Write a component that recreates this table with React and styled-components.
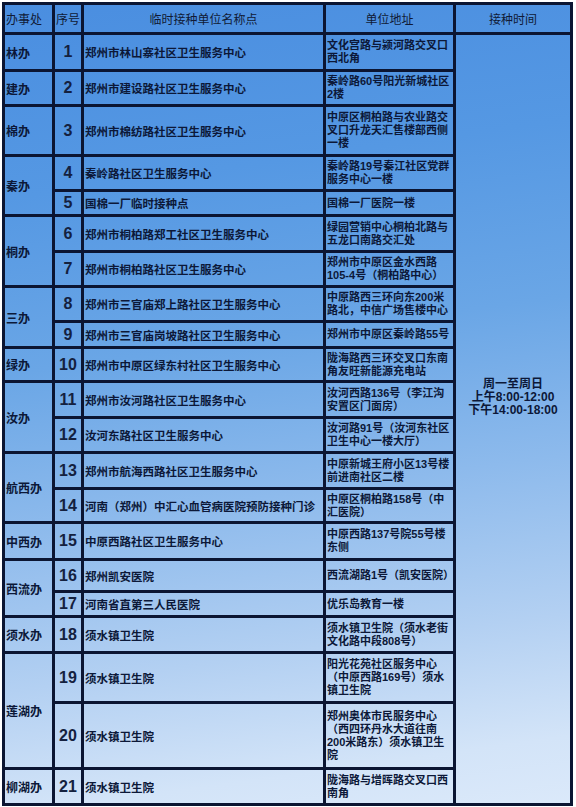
import React from 'react'
import styled, { createGlobalStyle } from 'styled-components'

const GlobalStyle = createGlobalStyle`
  html, body {
    margin: 0;
    padding: 0;
    background: #ffffff;
  }
  body {
    font-family: 'Liberation Sans', 'Noto Sans CJK SC', sans-serif;
    color: #0c1838;
  }
`

const Grid = styled.div`
  display: grid;
  grid-template-columns: 50px 29px 242px 130px 117px;
  grid-template-rows: 30px 37px 35px 50px 35px 25px 36px 35px 35px 26px 34px 36px 35px 36px 34px 37px 32px 25px 36px 50px 66px 36px;
  width: 568px;
  margin: 2px 0 0 2px;
  border-top: 3px solid #0b1532;
  border-left: 3px solid #0b1532;
  background: linear-gradient(
    172deg,
    #4a8ee0 0%,
    #5598e3 22%,
    #6aa6e6 42%,
    #8dbaec 60%,
    #b3d0f2 78%,
    #d3e4f8 92%,
    #dbe9fa 100%
  );
`

const Cell = styled.div`
  border-right: 3px solid #0b1532;
  border-bottom: 3px solid #0b1532;
  display: flex;
  align-items: center;
  min-width: 0;
  overflow: hidden;
  grid-column: ${(p) => p.$col};
  grid-row: ${(p) => (p.$row ? `${p.$row} / span ${p.$span || 1}` : 'auto')};
`

const HeadCell = styled(Cell)`
  justify-content: ${(p) => (p.$left ? 'flex-start' : 'center')};
  padding-left: ${(p) => (p.$left ? '1px' : '0')};
  font-size: 12px;
  font-weight: 400;
  color: #101a36;
`

const OfficeCell = styled(Cell)`
  padding-left: 1px;
  font-size: 12px;
  font-weight: 700;
  white-space: nowrap;
`

const NumCell = styled(Cell)`
  justify-content: center;
  font-size: 16px;
  font-weight: 700;
  color: #14213f;
`

const NameCell = styled(Cell)`
  padding-left: 1px;
  font-size: 11.5px;
  font-weight: 700;
  white-space: nowrap;
`

const AddrCell = styled(Cell)`
  padding-left: 1px;
  font-size: 11px;
  line-height: 13px;
  font-weight: 700;
  white-space: pre;
`

const TimeCell = styled(Cell)`
  flex-direction: column;
  justify-content: center;
  padding-bottom: 44px;
  font-size: 12px;
  line-height: 13px;
  font-weight: 700;
  text-align: center;
`

const groups = [
  { office: '林办', items: [[1, '郑州市林山寨社区卫生服务中心', '文化宫路与颍河路交叉口\n西北角']] },
  { office: '建办', items: [[2, '郑州市建设路社区卫生服务中心', '秦岭路60号阳光新城社区\n2楼']] },
  { office: '棉办', items: [[3, '郑州市棉纺路社区卫生服务中心', '中原区桐柏路与农业路交\n叉口升龙天汇售楼部西侧\n一楼']] },
  {
    office: '秦办',
    items: [
      [4, '秦岭路社区卫生服务中心', '秦岭路19号秦江社区党群\n服务中心一楼'],
      [5, '国棉一厂临时接种点', '国棉一厂医院一楼'],
    ],
  },
  {
    office: '桐办',
    items: [
      [6, '郑州市桐柏路郑工社区卫生服务中心', '绿园营销中心桐柏北路与\n五龙口南路交汇处'],
      [7, '郑州市桐柏路社区卫生服务中心', '郑州市中原区金水西路\n105-4号（桐柏路中心）'],
    ],
  },
  {
    office: '三办',
    items: [
      [8, '郑州市三官庙郑上路社区卫生服务中心', '中原路西三环向东200米\n路北，中信广场售楼中心'],
      [9, '郑州市三官庙岗坡路社区卫生服务中心', '郑州市中原区秦岭路55号'],
    ],
  },
  { office: '绿办', items: [[10, '郑州市中原区绿东村社区卫生服务中心', '陇海路西三环交叉口东南\n角友旺新能源充电站']] },
  {
    office: '汝办',
    items: [
      [11, '郑州市汝河路社区卫生服务中心', '汝河西路136号（李江沟\n安置区门面房）'],
      [12, '汝河东路社区卫生服务中心', '汝河路91号（汝河东社区\n卫生中心一楼大厅）'],
    ],
  },
  {
    office: '航西办',
    items: [
      [13, '郑州市航海西路社区卫生服务中心', '中原新城王府小区13号楼\n前进南社区二楼'],
      [14, '河南（郑州）中汇心血管病医院预防接种门诊', '中原区桐柏路158号（中\n汇医院）'],
    ],
  },
  { office: '中西办', items: [[15, '中原西路社区卫生服务中心', '中原西路137号院55号楼\n东侧']] },
  {
    office: '西流办',
    items: [
      [16, '郑州凯安医院', '西流湖路1号（凯安医院）'],
      [17, '河南省直第三人民医院', '优乐岛教育一楼'],
    ],
  },
  { office: '须水办', items: [[18, '须水镇卫生院', '须水镇卫生院（须水老街\n文化路中段808号）']] },
  {
    office: '莲湖办',
    items: [
      [19, '须水镇卫生院', '阳光花苑社区服务中心\n（中原西路169号）须水\n镇卫生院'],
      [20, '须水镇卫生院', '郑州奥体市民服务中心\n（西四环丹水大道往南\n200米路东）须水镇卫生\n院'],
    ],
  },
  { office: '柳湖办', items: [[21, '须水镇卫生院', '陇海路与增晖路交叉口西\n南角']] },
]

const App = () => {
  let row = 2
  const body = []
  groups.forEach((g) => {
    body.push(
      <OfficeCell key={g.office} $col={1} $row={row} $span={g.items.length}>
        {g.office}
      </OfficeCell>
    )
    g.items.forEach(([num, name, addr]) => {
      body.push(
        <NumCell key={`n${num}`} $col={2} $row={row}>{num}</NumCell>,
        <NameCell key={`m${num}`} $col={3} $row={row}>{name}</NameCell>,
        <AddrCell key={`a${num}`} $col={4} $row={row}>{addr}</AddrCell>
      )
      row += 1
    })
  })

  return (
    <>
      <GlobalStyle />
      <Grid>
        <HeadCell $col={1} $row={1} $left>办事处</HeadCell>
        <HeadCell $col={2} $row={1}>序号</HeadCell>
        <HeadCell $col={3} $row={1}>临时接种单位名称点</HeadCell>
        <HeadCell $col={4} $row={1}>单位地址</HeadCell>
        <HeadCell $col={5} $row={1}>接种时间</HeadCell>
        {body}
        <TimeCell $col={5} $row={2} $span={21}>
          <div>周一至周日</div>
          <div>上午8:00-12:00</div>
          <div>下午14:00-18:00</div>
        </TimeCell>
      </Grid>
    </>
  )
}

export default App
